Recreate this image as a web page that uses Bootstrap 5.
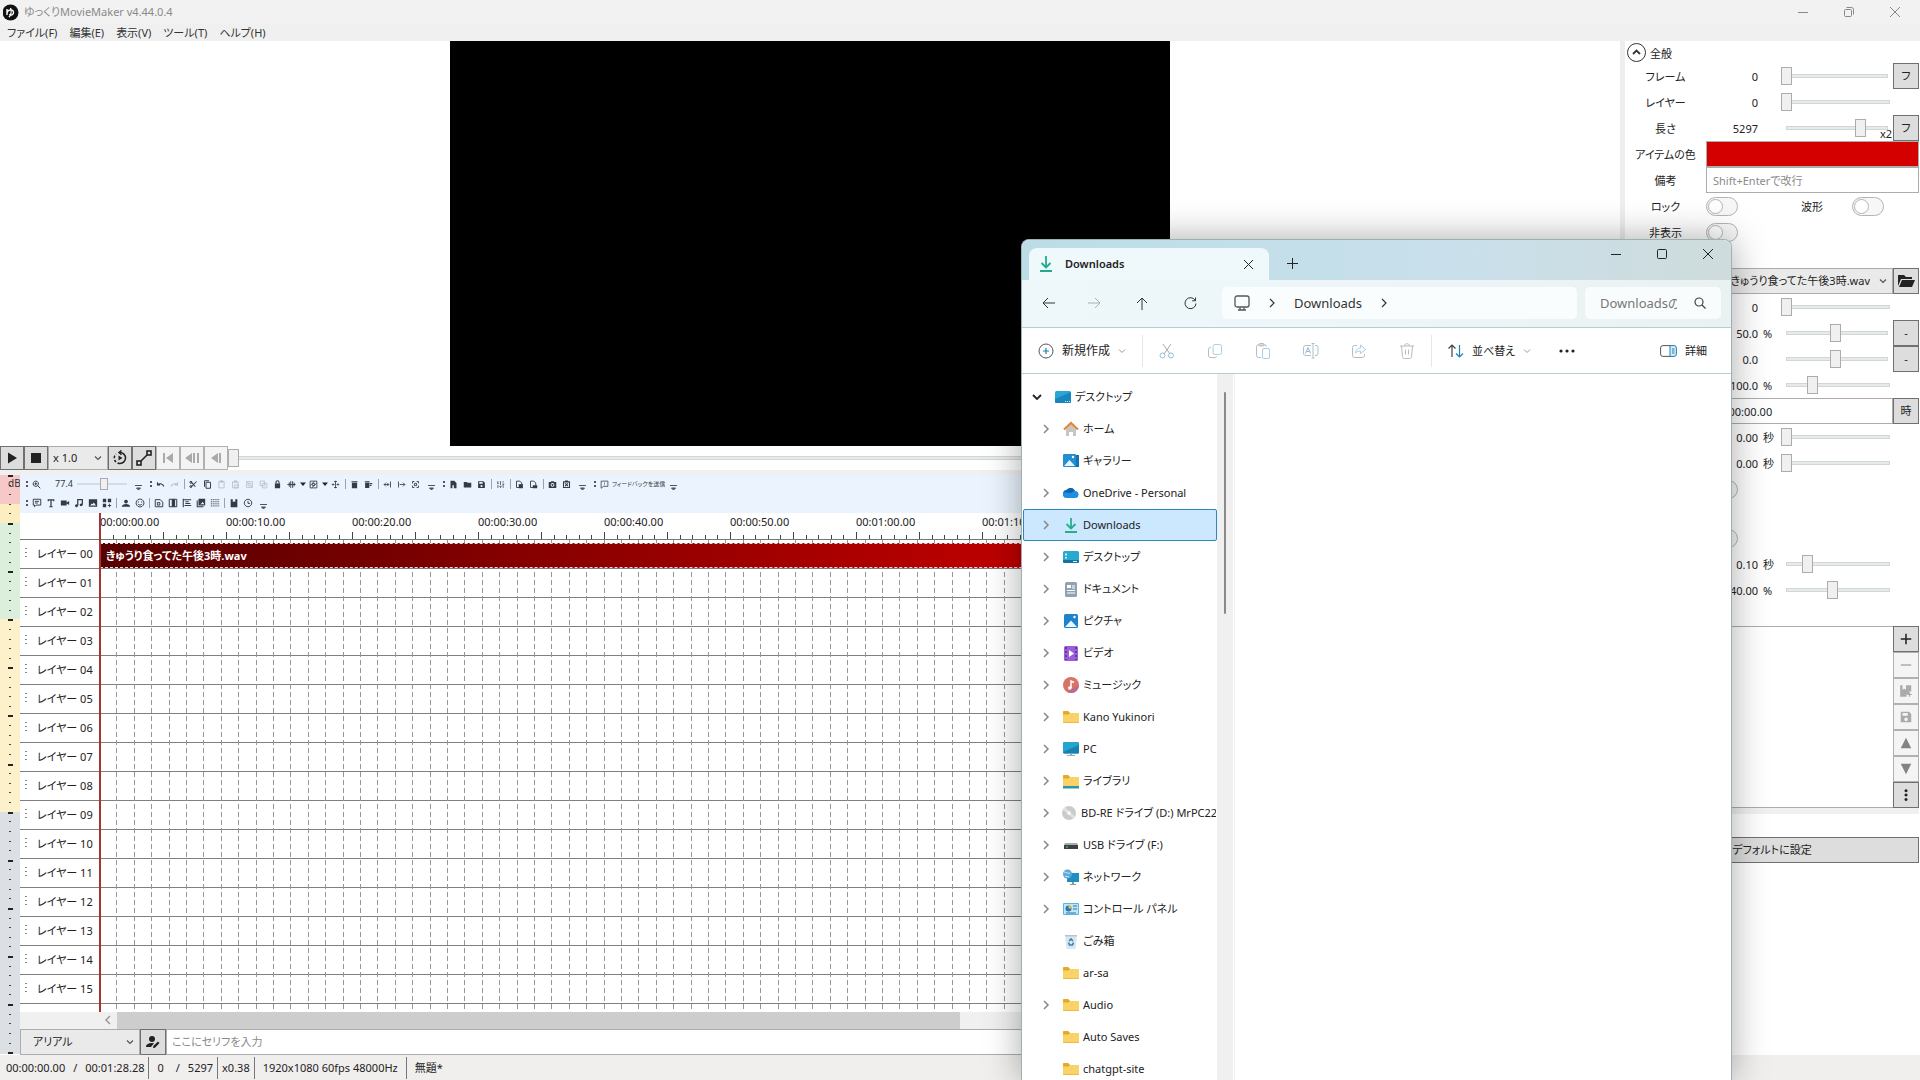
<!DOCTYPE html>
<html lang="ja">
<head>
<meta charset="utf-8">
<meta name="viewport" content="width=device-width, initial-scale=1">
<title>ゆっくりMovieMaker</title>
<link href="https://cdn.jsdelivr.net/npm/bootstrap@5.3.0/dist/css/bootstrap.min.css" rel="stylesheet">
<style>
:root{--line:#acacac;--dark:#707070;--face:#dddddd;--track:#e7eaea}
html,body{height:100%}
body{font-family:"Noto Sans","Noto Sans CJK JP",sans-serif;font-size:11px;line-height:16px;font-feature-settings:"palt";color:#222;background:#fff;overflow:hidden}
svg{display:block;flex:none}
button,input,select{font-feature-settings:"palt";font-family:inherit}
.app{min-height:100vh;height:100vh}
.titlebar{height:24px;background:#f2f2f2;color:#8a8a8a;padding:0 2px 0 3px}
.menubar{height:17px;background:#f0f0f0;gap:12px;padding:0 7px}
.menubar a{color:#333;text-decoration:none;line-height:17px}
.capbtn{width:46px;height:20px;border:0;background:none;padding:0;color:#888;display:flex;align-items:center;justify-content:center}
.stage{background:#fff}
.screen{width:720px;aspect-ratio:16/9;background:#000}
.sq{width:24px;height:24px;padding:0;border:1px solid var(--dark);background:var(--face);color:#222;display:flex;align-items:center;justify-content:center;border-radius:0;flex:none;font-size:11px}
.sq.big{width:26px;height:26px}
.sq:disabled{background:#f4f4f4;border-color:#adb2b5;color:#aaa}
.sq.dim:disabled{color:#838383}
.flatsel{border:1px solid var(--line);border-radius:0;background-color:#eaeaea;height:24px;padding:0 22px 0 12px;font-size:11px;line-height:20px;color:#222;
 --bs-form-select-bg-img:url("data:image/svg+xml,%3csvg xmlns='http://www.w3.org/2000/svg' viewBox='0 0 8 8'%3e%3cpath d='M1 2.5l3 3 3-3' fill='none' stroke='%23555' stroke-width='1.2'/%3e%3c/svg%3e");background-size:8px 8px;background-position:right 5px center}
.rng{appearance:none;-webkit-appearance:none;height:18px;min-width:0;margin:0;background:linear-gradient(#e7eaea,#e7eaea) center/calc(100% - 12px) 2px no-repeat,linear-gradient(#d2d6d6,#d2d6d6) center/calc(100% - 10px) 4px no-repeat}
.rng::-webkit-slider-thumb{-webkit-appearance:none;width:11px;height:18px;background:#f0f0f0;border:1px solid var(--line)}
.rng.tiny{height:12px;width:55px;background:linear-gradient(#d5dce2,#d5dce2) center/calc(100% - 5px) 2px no-repeat}
.rng.tiny::-webkit-slider-thumb{width:8px;height:12px}
.hsplit{height:5px;background:#f0f0f0}
.vsplit{width:5px;background:#eee;flex:none}
.meter{width:20px;flex:none}
.work{min-height:0}
.tools{background:#ebf4fe;height:38px;color:#333b45}
.toolrow{height:19px;padding-left:2px}
.tb{width:14px;height:14px;padding:2px;border:0;background:none;color:inherit;flex:none}
.tb:disabled{color:#b9c0c8}
.tsep{width:1px;height:10px;background:#9aa3ab;margin:0 2px;flex:none}
.grip{width:2px;height:6px;border-top:2px solid #555;border-bottom:2px solid #555;margin:0 2px 0 4px;flex:none}
.zoomval{font-size:9px;margin:0 2px 0 11px}
.feedback{font-size:6px}
.heads{width:80px;flex:none;border-right:1px solid #8a8a8a}
.lane{height:29px;border-bottom:1px solid #808080}
.ruler{height:27px;border-bottom:1px solid #6f7a74}
.cell{width:126px;flex:none;padding-top:1px}
.handle{color:#888;width:13px;padding-left:5px}
.sheet{min-width:0;overflow:hidden}
.overlay{position:absolute;left:0;top:0;width:100%;height:100%;pointer-events:none}
.playhead{position:absolute;left:79px;top:0;bottom:0;width:2px;background:#a8342f}
.clip{position:relative;width:1112px;height:25px;margin-top:3px;background:linear-gradient(90deg,#560000,#d40000);border:1px dashed #f3dcdc;color:#fff;font-weight:700;line-height:23px;padding-left:5px}
.hscroll{height:17px;background:#f0f0f0;padding-left:80px}
.hthumb{width:843px;background:#cdcdcd;height:17px}
.serif-in{border:1px solid var(--line);border-radius:0;height:26px;font-size:11px;padding:0 5px}
.serif-in::placeholder,.note::placeholder{color:#8a8a8a;opacity:1}
.status{height:26px;background:#f1efee;padding:2px 0 0 6px}
.status span.bar{width:1px;height:22px;background:#777}
.props{width:295px;flex:none;padding-right:1px}
.prow{height:26px}
.plabel{width:81px;text-align:center;flex:none;padding-top:2px}
.pval{width:52px;text-align:right;flex:none;padding-top:2px}
.punit{width:23px;padding:2px 0 0 5px;flex:none}
.phead{height:23px}
.swatch{height:26px;padding:0;border:1px solid var(--line);background:#d40000;border-radius:0}
.note{border:1px solid var(--line);border-radius:0;height:26px;font-size:11px;padding:0 6px}
.tog{appearance:none;-webkit-appearance:none;width:32px;height:19px;border:1px solid #b4b4b4;border-radius:10px;background:#f7f7f7;margin:0;padding:1px}
.tog::before{content:"";display:block;width:15px;height:15px;border:1px solid #b4b4b4;border-radius:50%;background:#fff}
.listbox{border:1px solid var(--line);border-right:0}
.x2{position:absolute;right:27px;bottom:-1px}
.explorer{position:absolute;right:188px;top:239px;bottom:0;width:711px;background:#fff;border:1px solid #9fb0b3;border-bottom:0;border-radius:8px 8px 0 0;box-shadow:0 0 36px rgba(0,0,0,.34)}
.tabs{height:40px;background:linear-gradient(90deg,#bcdde6,#c9e0ec 60%,#cfdcdc);border-radius:8px 8px 0 0}
.tab{width:240px;height:32px;margin:8px 0 0 7px;background:#eff8fb;border-radius:8px 8px 0 0;font-weight:600;padding:0 12px 0 10px}
.newtab{margin-top:13px}
.navrow{height:48px;background:linear-gradient(90deg,#eef8fb,#edf5f9 50%,#eaf1f1);border-bottom:1px solid #b4cfcf;padding-right:10px}
.cmdrow{height:47px;border-bottom:1px solid #b9cfcf;padding-top:1px}
.nb{width:48px;height:32px;border:0;background:none;padding:0;color:#333;display:flex;align-items:center;justify-content:center;flex:none}
.nb:disabled{color:#aab}
.addr{height:32px;background:#fafdfe;border-radius:5px;font-size:13px;color:#333}
.find{height:32px;width:136px;background:#f9fcfc;border-radius:5px;padding:0 11px 0 15px}
.find input{border:0;background:none;width:77px;padding:0;font-size:13px;color:#777}
.csep{width:1px;height:32px;background:#e3e9e9;flex:none}
.cmdtxt{border:0;background:none;padding:0;color:#222;display:flex;align-items:center;gap:8px;font-size:12px}
.cmdtxt.snug{font-size:11px}
.side{width:195px;flex:none;padding:7px 0 0 1px}
.node{height:32px;border:1px solid transparent;color:#222;text-decoration:none;padding-left:17px;overflow:hidden;white-space:nowrap;font-size:11px}
.node.root{padding-left:8px}
.node.on{background:#cce8ff;border-color:#2a8ac0;border-radius:2px}
.node .chev{width:12px;margin-right:10px;color:#888}
.node.root .chev{margin-right:11px;color:#222}
.vbar{width:16px;background:#f0f0f0;flex:none;padding:18px 0 0 7px}
.vthumb{width:2px;height:222px;background:#8a8a8a;border-radius:1px}
.files{border-left:1px solid #eee;margin-left:1px}
</style>
<script src="https://cdn.jsdelivr.net/npm/bootstrap@5.3.0/dist/js/bootstrap.bundle.min.js"></script>
</head>
<body>
<div class="app d-flex flex-column position-relative">
  <header>
    <div class="titlebar d-flex align-items-center">
      <svg width="17" height="17" viewBox="0 0 17 17"><circle cx="7.500" cy="8.500" r="8" fill="#111"/><path d="M4 5v6M4 9c1-4 6-4 6.500-1s-3 4-4 2M7.500 4c1.200 3 .5 7-1.500 9" fill="none" stroke="#fff" stroke-width="1.400"/></svg>
      <span class="ms-1">ゆっくりMovieMaker v4.44.0.4</span>
      <div class="ms-auto d-flex">
        <button class="capbtn" aria-label="最小化"><svg width="10" height="10"><path d="M0 5.500h10" stroke="currentColor"/></svg></button>
        <button class="capbtn" aria-label="元に戻す"><svg width="10" height="10" fill="none" stroke="currentColor"><rect x=".5" y="2.500" width="7" height="7" rx="1"/><path d="M2.500.5h5a2 2 0 0 1 2 2v5"/></svg></button>
        <button class="capbtn" aria-label="閉じる"><svg width="10" height="10"><path d="M0 0l10 10M10 0L0 10" stroke="currentColor"/></svg></button>
      </div>
    </div>
    <nav class="menubar d-flex"><a href="#">ファイル(F)</a><a href="#">編集(E)</a><a href="#">表示(V)</a><a href="#">ツール(T)</a><a href="#">ヘルプ(H)</a></nav>
  </header>

  <div class="d-flex flex-grow-1 work">
    <main class="d-flex flex-column flex-grow-1 work sheet">
      <div class="stage d-flex justify-content-center"><div class="screen"></div></div>
      <div class="d-flex align-items-center">
        <button class="sq" aria-label="再生"><svg width="14" height="14" viewBox="0 0 14 14"><path d="M3 1.500v11l9-5.500z" fill="#222"/></svg></button>
        <button class="sq" aria-label="停止"><svg width="10" height="10"><rect width="10" height="10" fill="#222"/></svg></button>
        <select class="form-select flatsel flex-shrink-0 px-1" style="width:60px" aria-label="速度"><option>x 1.0</option></select>
        <button class="sq" aria-label="ループ"><svg width="16" height="16" viewBox="0 0 16 16" fill="none" stroke="#222" stroke-width="1.500"><path d="M8 2.500a5.500 5.500 0 0 1 0 11"/><path d="M8 13.500a5.500 5.500 0 0 1-4-9.500" stroke-dasharray="2.500 1.800"/><path d="M9.500.5L7 2.500l2.500 2.200" /><path d="M6.500 5.500v5l4-2.500z" fill="#222" stroke="none"/></svg></button>
        <button class="sq" aria-label="直線"><svg width="16" height="16" viewBox="0 0 16 16" fill="none" stroke="#222" stroke-width="1.600"><rect x="1" y="11" width="4" height="4"/><rect x="11" y="1" width="4" height="4"/><path d="M5 11l6-6"/></svg></button>
        <button class="sq" disabled aria-label="先頭"><svg width="12" height="12" fill="currentColor"><path d="M1 1h2v10H1zM11 1v10L4 6z"/></svg></button>
        <button class="sq" disabled aria-label="前"><svg width="16" height="12" fill="currentColor"><path d="M8 1v10L1 6zM9 1h2v10H9zM13 1h2v10h-2z"/></svg></button>
        <button class="sq" disabled aria-label="戻る"><svg width="12" height="12" fill="currentColor"><path d="M8 1v10L1 6zM9 1h2v10H9z"/></svg></button>
        <input type="range" class="rng flex-grow-1" min="0" max="100" value="0" aria-label="シーク">
      </div>
      <div class="hsplit"></div>
      <div class="d-flex flex-grow-1 work">
        <svg id="meter" class="meter" height="579"></svg>
        <div class="d-flex flex-column flex-grow-1 sheet">
          <div class="tools">
            <div class="toolrow d-flex align-items-center" id="tools1"></div>
            <div class="toolrow d-flex align-items-center" id="tools2"></div>
          </div>
          <div class="d-flex flex-grow-1 position-relative overflow-hidden work">
            <div class="heads" id="heads"><div class="ruler"></div></div>
            <div class="sheet flex-grow-1">
              <div class="ruler d-flex position-relative overflow-hidden" id="ruler"><svg class="overlay" id="ticks"></svg></div>
              <div class="position-relative" id="lanes"><svg class="overlay" id="beats"></svg></div>
            </div>
            <div class="playhead"></div>
          </div>
          <div class="hscroll d-flex align-items-center"><svg width="17" height="10" fill="none" stroke="#999" stroke-width="1.500"><path d="M10 1L6 5l4 4"/></svg><div class="hthumb"></div></div>
          <div class="d-flex">
            <select class="form-select flatsel flex-shrink-0" style="width:120px;height:26px" aria-label="キャラクター"><option>アリアル</option></select>
            <button class="sq big" aria-label="キャラクター編集"><svg width="14" height="14" viewBox="0 0 14 14" fill="#222"><circle cx="6" cy="4" r="3"/><path d="M0 12c0-3 3-4 6-4l2 .3-3 3.700zM7 13l.3-2L12 6.500l1.500 1.500L9 12.700z"/></svg></button>
            <input class="form-control serif-in" type="text" placeholder="ここにセリフを入力" aria-label="セリフ">
          </div>
        </div>
      </div>
    </main>
    <div class="vsplit"></div>
    <aside class="props" id="props"></aside>
  </div>

  <footer class="status d-flex align-items-center">
    <span>00:00:00.00</span><span class="mx-2">/</span><span>00:01:28.28</span><span class="bar mx-1"></span>
    <span class="ms-1">0</span><span class="mx-2 ps-1">/</span><span>5297</span><span class="bar mx-1"></span><span>x0.38</span><span class="bar mx-1"></span>
    <span class="ms-1">1920x1080 60fps 48000Hz</span><span class="bar mx-2"></span><span>無題*</span>
  </footer>

  <section class="explorer d-flex flex-column" aria-label="Downloads">
    <div class="tabs d-flex align-items-start">
      <div class="tab d-flex align-items-center">
        <svg width="14" height="16" viewBox="0 0 14 16" fill="none" stroke="#22ab8d" stroke-width="1.800"><path d="M7 0v11M2.500 7L7 11.500 11.500 7M1 15h12"/></svg>
        <span class="ms-2 ps-1">Downloads</span>
        <button class="capbtn ms-auto w-auto pe-1 text-dark" aria-label="タブを閉じる"><svg width="9" height="9"><path d="M0 0l9 9M9 0L0 9" stroke="currentColor"/></svg></button>
      </div>
      <button class="capbtn newtab text-dark" aria-label="新しいタブ"><svg width="11" height="11"><path d="M5.500 0v11M0 5.500h11" stroke="currentColor"/></svg></button>
      <div class="d-flex ms-auto mt-1 text-dark">
        <button class="capbtn text-dark" aria-label="最小化"><svg width="10" height="10"><path d="M0 5.500h10" stroke="currentColor"/></svg></button>
        <button class="capbtn text-dark" aria-label="最大化"><svg width="10" height="10"><rect x=".5" y=".5" width="9" height="9" rx="1" fill="none" stroke="currentColor"/></svg></button>
        <button class="capbtn text-dark" aria-label="閉じる"><svg width="10" height="10"><path d="M0 0l10 10M10 0L0 10" stroke="currentColor"/></svg></button>
      </div>
    </div>
    <div class="navrow d-flex align-items-center ps-1">
      <button class="nb" style="width:44px" aria-label="戻る"><svg width="13" height="12" fill="none" stroke="currentColor"><path d="M13 6H1M6 1L1 6l5 5"/></svg></button>
      <button class="nb" disabled aria-label="進む"><svg width="13" height="12" fill="none" stroke="currentColor"><path d="M0 6h12M7 1l5 5-5 5"/></svg></button>
      <button class="nb" aria-label="上へ"><svg width="12" height="13" fill="none" stroke="currentColor"><path d="M6 13V1M1 6l5-5 5 5"/></svg></button>
      <button class="nb" aria-label="更新"><svg width="13" height="13" fill="none" stroke="currentColor"><path d="M11.300 3.500A5.500 5.500 0 1 0 12 6.500M11.500.5v3.300H8.200"/></svg></button>
      <div class="addr d-flex align-items-center flex-grow-1 ms-2 me-2 px-2">
        <svg class="ms-1" width="16" height="16" viewBox="0 0 16 16" fill="none" stroke="#555" stroke-width="1.300"><rect x="1" y="1" width="14" height="11" rx="2"/><path d="M4 15h8M6 12.500V15M10 12.500V15"/></svg>
        <svg class="ms-3 me-3" width="12" height="10" fill="none" stroke="#333" stroke-width="1.200"><path d="M4 1l4 4-4 4"/></svg>
        <span>Downloads</span>
        <svg class="ms-3" width="12" height="10" fill="none" stroke="#333" stroke-width="1.200"><path d="M4 1l4 4-4 4"/></svg>
      </div>
      <label class="find d-flex align-items-center justify-content-between"><input type="text" value="Downloadsの検索" aria-label="検索"><svg class="me-1" width="12" height="12" fill="none" stroke="#444" stroke-width="1.200"><circle cx="5" cy="5" r="4"/><path d="M8 8l3.500 3.500"/></svg></label>
    </div>
    <div class="cmdrow d-flex align-items-center">
      <button class="cmdtxt ms-3"><svg width="16" height="16" viewBox="0 0 16 16" fill="none"><circle cx="8" cy="8" r="7" stroke="#555"/><path d="M8 5v6M5 8h6" stroke="#1d7fb8" stroke-width="1.200"/></svg>新規作成<svg width="8" height="6" fill="none" stroke="#999"><path d="M1 1.500l3 3 3-3"/></svg></button>
      <div class="csep ms-3"></div>
      <button class="nb" disabled aria-label="切り取り"><svg width="16" height="16" fill="none"><path d="M4 1l7 10M12 1L5 11" stroke="#aaa"/><circle cx="3.500" cy="12.500" r="2.500" stroke="#8fc0dc"/><circle cx="12" cy="12.500" r="2.500" stroke="#8fc0dc"/></svg></button>
      <button class="nb" disabled aria-label="コピー"><svg width="16" height="16" fill="none"><rect x="6" y="1.500" width="8.500" height="10" rx="2" stroke="#a8cfe4"/><path d="M4 4.500C2 4.500 1.500 5 1.500 7v5c0 2 .5 2.500 2.500 2.500h3c1.500 0 2.500 0 2.700-1" stroke="#bbb"/></svg></button>
      <button class="nb" disabled aria-label="貼り付け"><svg width="16" height="16" fill="none"><path d="M6 14.500H3.500a2 2 0 0 1-2-2v-9c0-1 .5-1.500 1.500-1.500h7c1 0 1.500.5 1.500 1.500" stroke="#bbb"/><rect x="4" y=".5" width="5" height="2.500" rx="1" stroke="#bbb"/><rect x="7.500" y="5.500" width="7" height="10" rx="1.500" stroke="#a8cfe4"/></svg></button>
      <button class="nb" disabled aria-label="名前の変更"><svg width="18" height="16" fill="none"><path d="M9 2.500H3.500a2 2 0 0 0-2 2v6a2 2 0 0 0 2 2H9M13 2.500h1a2 2 0 0 1 2 2v6a2 2 0 0 1-2 2h-1M9.500.5h3M9.500 15h3M11 .5V15" stroke="#aebfc8"/><path d="M3.500 10.500l2.500-6 2.500 6M4.500 8.500h3" stroke="#8fb8d8"/></svg></button>
      <button class="nb" disabled aria-label="共有"><svg width="16" height="16" fill="none"><path d="M6 2.500H3.500a2 2 0 0 0-2 2v8a2 2 0 0 0 2 2h8a2 2 0 0 0 2-2V11" stroke="#bbb"/><path d="M4.500 10c.5-3.500 2.500-5 5-5V2l5 4.500-5 4V8c-2 0-3.500.5-5 2z" stroke="#a8cfe4"/></svg></button>
      <button class="nb" disabled aria-label="削除"><svg width="14" height="16" fill="none" stroke="#bbb"><path d="M0 3h14M4.500 3c0-3 5-3 5 0M1.500 3l1 10.500c.1 1.500.5 2 2 2h5c1.500 0 1.900-.5 2-2l1-10.500M5.500 6.500v5M8.500 6.500v5"/></svg></button>
      <div class="csep"></div>
      <button class="cmdtxt snug ms-3"><svg width="16" height="14" fill="none" stroke-width="1.200"><path d="M4 13V1M.5 4.500L4 1l3.500 3.500" stroke="#444"/><path d="M11.500 1v12M8 9.500l3.500 3.500L15 9.500" stroke="#1d7fb8"/></svg>並べ替え<svg width="8" height="6" fill="none" stroke="#999"><path d="M1 1.500l3 3 3-3"/></svg></button>
      <button class="nb ms-2 ps-2" aria-label="その他"><svg width="16" height="4"><g fill="#222"><circle cx="2" cy="2" r="1.600"/><circle cx="8" cy="2" r="1.600"/><circle cx="14" cy="2" r="1.600"/></g></svg></button>
      <button class="cmdtxt snug ms-auto me-4"><svg width="17" height="12" fill="none"><path d="M10 .6H3A2.400 2.400 0 0 0 .6 3v6A2.400 2.400 0 0 0 3 11.400h7" stroke="#555"/><path d="M10 .6h4A2.400 2.400 0 0 1 16.400 3v6a2.400 2.400 0 0 1-2.400 2.400h-4zM12 4h2.500M12 6h2.500M12 8h2.500" stroke="#1d7fb8" fill="#d8ecf8"/></svg>詳細</button>
    </div>
    <div class="d-flex flex-grow-1 overflow-hidden">
      <nav class="side" id="tree"></nav>
      <div class="vbar"><div class="vthumb"></div></div>
      <div class="files flex-grow-1"></div>
    </div>
  </section>
</div>

<script>
const $ = id => document.getElementById(id);
const f = d => `<path d="${d}" fill="currentColor"/>`;
const s = (d, w = 2) => `<path d="${d}" fill="none" stroke="currentColor" stroke-width="${w}"/>`;
/* toolbar glyphs, 24 x 24 grid */
const G = {
  zoom: s('M10 3a7 7 0 1 0 .1 0M15 15l7 7M6.500 10h7M10 6.500v7', 2.6),
  undo: s('M4 6v7h7M4 13c5-5 13-4 17 4', 3), redo: s('M20 6v7h-7M20 13c-5-5-13-4-17 4', 3),
  cut: s('M4 3l13 15M4 20L20 4', 2.8) + s('M5 4a2.500 2.500 0 1 0 .1 0M5 15a2.500 2.500 0 1 0 .1 0', 2.5),
  copy: s('M8 6h12v16H8zM4 18V2h12', 2.6), paste: s('M5 4h14v17H5zM9 2h6v4H9z', 2.4),
  paste2: s('M4 5h15v16H4zM9 2h6v4H9zM10 13h9v8h-9z', 2.4),
  group: s('M4 4h16v16H4zM8 8h8v8H8zM4 4l16 16', 2), ungroup: s('M3 3h12v12H3zM9 9h12v12H9z', 2.4),
  lock: f('M5 9h14v13H5z') + s('M8 9V6a4 4 0 0 1 8 0v3', 2.8),
  wave: s('M1 12h22M6 6v12M10 3v18M15 3v18M19 7v10', 2.4),
  box: s('M3 3h18v18H3zM3 15L15 3M7 21L21 8M9 9h6v6H9z', 2.2),
  split: s('M2 12h6M16 12h6M12 2v20M8 4h8M8 20h8M5 9l3 3-3 3M19 9l-3 3 3 3', 2.2),
  trash: f('M5 7h14v15H5zM4 3h16v3H4z'), trash2: f('M3 7h11v14H3zM2 3h13v3H2zM15 8h7v3h-7zM15 13h5v3h-5z'),
  inn: s('M20 4v16M3 12h14M8 7l-5 5 5 5M13 8v8', 2.2), out: s('M4 4v16M7 12h14M16 7l5 5-5 5', 2.2),
  sel: s('M4 4h5M15 4h5M4 20h5M15 20h5M4 4v5M20 4v5M4 15v5M20 15v5M9 9h6v6H9z', 2.4),
  fileadd: f('M4 2h10l6 6v14h-7v-8h-4v8H4z'), folder: f('M2 5h8l2 2h10v13H2z'),
  save: `<path fill-rule="evenodd" fill="currentColor" d="M3 3h14l4 4v14H3zM6 5v5h9V5zM12 13a3 3 0 1 0 .1 0z"/>`,
  mix: s('M5 3v6M5 13v8M12 3v10M12 17v4M19 3v4M19 11v10M3 9h4M9 17h6M17 11h5', 2),
  file1: s('M4 3h9l5 5v12H4z', 2.4) + f('M10 11h11v11H10z'), file2: s('M4 3h9l5 5v12H4z', 2.4) + f('M10 14h12v8H10z'),
  cam: `<path fill-rule="evenodd" fill="currentColor" d="M2 5h5l2-2h6l2 2h5v16H2zM12 8a5 5 0 1 0 .1 0zM12 10.500a2.500 2.500 0 1 1-.1 0z"/>`,
  camx: s('M4 5h16v15H4zM8 9l8 7M16 9l-8 7M8 3h8', 2.8),
  talk: s('M3 3h18v14H10l-4 4v-4H3zM7 8h10M7 12h7', 2.3), text: f('M4 3h16v5h-2.500l-.5-2h-3.500v14H16v2H8v-2h2.500V6H7l-.5 2H4z'),
  video: f('M2 6h14v12H2zM16 11l6-4v10l-6-4z'), music: s('M9 18V4h11v12', 3) + f('M6 15a3.500 3.500 0 1 0 .1 0M17 13a3.500 3.500 0 1 0 .1 0'),
  image: `<path fill-rule="evenodd" fill="currentColor" d="M2 3h20v18H2zM5 18h14l-5-7-3 4-2-2z"/>`,
  shapes: f('M2 2h8v8H2zM14 2h8v8h-8zM2 14h8v8H2zM14 17h8v2h-8zM17 14h2v8h-2z'),
  person: f('M12 4a4.500 4.500 0 1 0 .1 0M2 21c0-9 20-9 20 0z'),
  smile: s('M12 2.500a9.500 9.500 0 1 0 .1 0M7 14c2 4 8 4 10 0M8 8v3M16 8v3', 2.2),
  page: s('M3 4h12l6 6v11H3zM8 11h6v6H8z', 2.3), half: s('M3 3h18v18H3z', 2.4) + f('M9 3h8v18H9z'),
  chart: s('M3 2v20M2 4h20M8 9h8M8 13h12M6 18h16', 2.6),
  photos: s('M3 6v15h15', 2.6) + `<path fill-rule="evenodd" fill="currentColor" d="M6 2h16v16H6zM9 15h11l-4-6-3 4z"/>`,
  dots: s('M2 4h20M2 9h20M2 14h20M2 19h20', 2.4).replace('/>', ' stroke-dasharray="2.500 2"/>'),
  flag: f('M4 3h5v7l3-2 3 2V3h5v19H4z'), clock: s('M12 3a9 9 0 1 0 .1 0M12 7v6h5', 2.2),
  fb: s('M3 3h18v14H9l-6 5zM12 7v3M12 12v2', 2)
};
const draw = (n, px) => `<svg width="${px}" height="${px}" viewBox="0 0 24 24">${G[n]}</svg>`;
const tools = (list, px) => list.split(' ').map(t => {
  if (t === '|') return '<span class="tsep"></span>';
  if (t === ':') return '<span class="grip"></span>';
  if (t === 'v') return '<svg width="16" height="14" style="color:#555"><path d="M5 8.500h7M6.500 11h4l-2 2z" stroke="currentColor" fill="currentColor"/></svg>';
  if (t === '^') return '<svg width="8" height="14"><path d="M1 5.500h6L4 9z" fill="#222"/></svg>';
  if (t === '#') return '<span class="zoomval">77.4</span><input type="range" class="rng tiny" value="53" aria-label="拡大率">';
  if (t === '@') return '<span class="feedback">フィードバックを送信</span>';
  const off = t[0] === '-', n = off ? t.slice(1) : t;
  return `<button class="tb" ${off ? 'disabled' : ''} aria-label="${n}">${draw(n, px)}</button>`;
}).join('');
$('tools1').innerHTML = tools(': zoom # v : undo -redo | cut copy -paste -paste2 -group -ungroup lock wave ^ box ^ split | trash trash2 | inn out sel v : fileadd folder save | mix | file1 file2 | cam camx v : fb @ v', 9);
$('tools2').innerHTML = tools(': talk text video music image shapes | person smile | page half chart photos dots | flag clock v', 10);

/* level meter: zones and 12 x 5 divisions */
const bands = [[0, 29, '#f6c8c8'], [29, 19, '#fdeec0'], [48, 96, '#dbefdc'], [144, 193, '#fdf1cc'], [337, 242, '#dce0e4']];
let m = bands.map(b => `<rect y="${b[0]}" width="20" height="${b[1]}" fill="${b[2]}"/>`).join('');
for (let i = 0; i <= 60; i++) {
  const y = Math.round(i * 9.62);
  m += i % 5 ? `<rect x="9" y="${y}" width="2" height="1" fill="#444"/>` : `<rect x="8" y="${y}" width="5" height="2" fill="#222"/>`;
}
$('meter').innerHTML = m + '<text x="8" y="12" font-size="10" fill="#333">dB</text>';

/* ruler, 12.6 px per second */
const px = 12.6;
let t = '';
for (let i = 0; i < 122; i++) t += `<rect x="${Math.round(i * px)}" y="${i % 5 ? 22 : 19}" width="1" height="${i % 5 ? 4 : 7}" fill="#444"/>`;
$('ticks').innerHTML = t;
for (let i = 0; i < 12; i++) $('ruler').insertAdjacentHTML('beforeend', `<div class="cell">00:0${Math.floor(i / 6)}:${i % 6}0.00</div>`);

for (let i = 0; i < 16; i++) {
  const n = String(i).padStart(2, '0');
  $('heads').insertAdjacentHTML('beforeend', `<div class="lane d-flex align-items-center"><span class="handle"><svg width="2" height="12" fill="currentColor"><path d="M0 0h2v1H0zM0 4h2v1H0zM0 8h2v1H0z"/></svg></span><span class="ps-1">レイヤー ${n}</span></div>`);
  $('lanes').insertAdjacentHTML('beforeend', `<div class="lane overflow-hidden">${i ? '' : '<div class="clip">きゅうり食ってた午後3時.wav</div>'}</div>`);
}
$('lanes').insertAdjacentHTML('beforeend', '<div style="height:29px"></div>');
let b = '';
for (let i = 1; i < 88; i++) { const x = Math.round(i * 17.4) - .5; b += `M${x} 0V493`; }
$('beats').innerHTML = `<path d="${b}" stroke="#959595" stroke-dasharray="5 3" fill="none"/>`;

/* property rows */
const row = (label, val, unit, pos, btn, extra = '') => `<div class="prow d-flex align-items-center position-relative"><span class="plabel">${label}</span><span class="pval">${val}</span><span class="punit">${unit}</span><input type="range" class="rng flex-grow-1" value="${pos}" aria-label="${label || val}"${btn ? '' : ' style="margin-right:24px"'}>${btn ? `<button class="sq big">${btn}</button>` : ''}${extra}</div>`;
const tog = (l) => `<input type="checkbox" class="tog" aria-label="${l}">`;
const mini = (inner, dis, lab) => `<button class="sq big ${dis === 2 ? 'dim' : ''}" ${dis ? 'disabled' : ''} aria-label="${lab}"><svg width="14" height="14" viewBox="0 0 24 24">${inner}</svg></button>`;
$('props').innerHTML = `
<div class="d-flex align-items-center gap-1" style="height:22px;padding-left:2px"><svg width="19" height="19" fill="none" stroke="#333"><circle cx="9.500" cy="9.500" r="9"/><path d="M6 11l3.500-3.500L13 11" stroke-width="1.800"/></svg><span class="pt-1">全般</span></div>`
+ row('フレーム', '0', '', 0, 'フ') + row('レイヤー', '0', '', 0, '') + row('長さ', '5297', '', 73, 'フ', '<span class="x2">x2</span>')
+ `<div class="prow d-flex align-items-center"><span class="plabel">アイテムの色</span><button class="swatch flex-grow-1" aria-label="アイテムの色"></button></div>
<div class="prow d-flex align-items-center"><label class="plabel" for="note">備考</label><input id="note" class="form-control note" placeholder="Shift+Enterで改行"></div>
<div class="prow d-flex align-items-center"><span class="plabel">ロック</span>${tog('ロック')}<span class="plabel" style="width:114px;padding-left:34px">波形</span>${tog('波形')}</div>
<div class="prow d-flex align-items-center"><span class="plabel">非表示</span>${tog('非表示')}</div>
<div class="phead"></div>
<div class="prow d-flex"><span class="plabel"></span><select class="form-select flatsel text-end" style="height:26px" aria-label="ファイル"><option>きゅうり食ってた午後3時.wav</option></select><button class="sq big" aria-label="開く"><svg width="18" height="14" viewBox="0 0 18 14"><path d="M1 12V1h6l2 2h6v2H4zM2 13L5 6h13l-3 7z" fill="#222"/></svg></button></div>`
+ row('', '0', '', 0, '') + row('', '50.0', '%', 49, '-') + row('', '0.0', '', 49, '-') + row('', '100.0', '%', 25, '')
+ `<div class="prow d-flex"><span class="plabel"></span><input class="form-control note" value="00:00:00.00" aria-label="再生開始位置"><button class="sq big">時</button></div>`
+ row('', '0.00', '秒', 0, '') + row('', '0.00', '秒', 0, '')
+ `<div class="prow d-flex align-items-center"><span class="plabel"></span>${tog('ループ')}</div><div class="phead"></div>
<div class="prow d-flex align-items-center"><span class="plabel"></span>${tog('エコー')}</div>`
+ row('', '0.10', '秒', 20, '') + row('', '40.00', '%', 45, '')
+ `<div class="phead"></div>
<div class="d-flex"><div class="listbox flex-grow-1"></div><div>`
+ mini(s('M12 3v18M3 12h18', 2.6), 0, '追加') + mini(s('M3 12h18', 2.5), 1, '削除')
+ mini(f('M2 2h4v8l3-2 3 2V2h9v11h-4v4h-4v5H2zM17 14h2v3h3v2h-3v3h-2v-3h-3v-2h3z'), 1, 'テンプレート') + mini(G.save, 1, '保存')
+ mini(f('M12 3l9 18H3z'), 2, '上へ') + mini(f('M12 21L3 3h18z'), 2, '下へ')
+ mini(f('M12 2a2.600 2.600 0 1 0 .1 0M12 9.500a2.600 2.600 0 1 0 .1 0M12 17a2.600 2.600 0 1 0 .1 0'), 0, 'メニュー')
+ `</div></div><div class="hsplit" style="height:6px"></div><div class="phead"></div>
<button class="sq w-100" style="height:26px">デフォルトに設定</button>`;

/* explorer tree */
const folder = '<path d="M0 3a1 1 0 0 1 1-1h4l2 2h8a1 1 0 0 1 1 1v8a1 1 0 0 1-1 1H1a1 1 0 0 1-1-1z" fill="#f9d368"/><path d="M0 3a1 1 0 0 1 1-1h4l2 2-1.500 1.500H0z" fill="#e3a92b"/><path d="M0 13h16a1 1 0 0 1-1 1H1a1 1 0 0 1-1-1z" fill="#eeb93d"/>';
const I = {
  desk: '<rect y="2" width="16" height="12" rx="1.500" fill="#2aa5d6"/><path d="M0 10L16 3v9.500a1.500 1.500 0 0 1-1.500 1.500h-13A1.500 1.500 0 0 1 0 12.500z" fill="#1786bd"/><path d="M10 12.500h5" stroke="#bfe9f7" stroke-dasharray="1 1"/>',
  desk2: '<rect y="2" width="16" height="12" rx="1.500" fill="#2aa9cf"/><path d="M0 11h16v1.500a1.500 1.500 0 0 1-1.500 1.500h-13A1.500 1.500 0 0 1 0 12.500z" fill="#14739c"/><path d="M2 4.500h2v2H2zM2 8h2v1.500H2zM10 12h4v1h-4z" fill="#d8f4fb"/>',
  home: '<path d="M3 8l5-5 5 5v7H10v-4H6v4H3z" fill="#c9c5c3"/><path d="M1 8.500L8 2l7 6.500" fill="none" stroke="#e0863a" stroke-width="2.200"/>',
  gal: '<path d="M4 2h12v12H4z" fill="#1573b5"/><rect x="0" y="1" width="13" height="13" rx="1" fill="#238fd2"/><path d="M1 13l5.500-6L12 13z" fill="#e6f6ff"/><circle cx="10" cy="4" r="1.200" fill="#fff"/>',
  cloud: '<path d="M4 13a4 4 0 0 1-.5-8A5 5 0 0 1 12 6a3.500 3.500 0 0 1 0 7z" fill="#1c8fe0"/><path d="M3.500 5A5 5 0 0 1 12 6c-2 0-3 2-5 2S4 7 .5 8a4 4 0 0 1 3-3z" fill="#1263ae"/>',
  down: '<path d="M8 1v10M3.500 7L8 11.500 12.500 7M2 15h12" fill="none" stroke="#27ae8f" stroke-width="1.800"/>',
  doc: '<rect x="2" y="1" width="12" height="15" rx="1.500" fill="#8fa3b5"/><path d="M4 4h4v3H4zM9 4.500h3v1H9zM9 6.500h3v1H9zM4 9h8v1H4zM4 11.500h8v1H4z" fill="#fff"/>',
  pic: '<rect x="1" y="1" width="14" height="14" rx="1.500" fill="#1c83cc"/><path d="M2 14l6-6.500L14 14z" fill="#eaf8ff"/><circle cx="11.500" cy="4" r="1.200" fill="#fff"/>',
  vid: '<rect x="1" y="1" width="14" height="15" rx="1.500" fill="#9a5fd6"/><path d="M3 2v13M13 2v13" stroke="#5c2f9c" stroke-width="1.600" stroke-dasharray="2 2"/><path d="M6 5v7l5-3.500z" fill="#fff"/>',
  mus: '<circle cx="8" cy="8" r="8" fill="#d77466"/><path d="M8 16A8 8 0 0 0 16 8L4 15z" fill="#b96a94"/><path d="M8 11V4l3 1.500" fill="none" stroke="#fff" stroke-width="1.500"/><circle cx="6.800" cy="11" r="1.800" fill="#fff"/>',
  folder, lib: folder + '<path d="M0 13h16v2.500H0z" fill="#2c97a8"/>',
  pc: '<rect y="1" width="16" height="11.500" rx="1" fill="#27a3cf"/><path d="M0 11L16 4v7.500a1 1 0 0 1-1 1H1z" fill="#1583ad"/><path d="M7 12.500h2V14h3v1H4v-1h3z" fill="#9ab"/>',
  disc: '<circle cx="8" cy="8" r="7" fill="#cbcbcb"/><path d="M8 8L3 3.500M8 8l5 4.500" stroke="#e2e2e2" stroke-width="3"/><circle cx="8" cy="8" r="2" fill="#f6f6f6"/>',
  usb: '<path d="M2 6h12l1 2H1z" fill="#aaa"/><rect x="1" y="8" width="14" height="4" fill="#3a4046"/><path d="M3 9.500h2v1H3z" fill="#5fd08a"/>',
  net: '<rect x="4" y="4" width="12" height="9" fill="#1f8fc2"/><path d="M9 13h2v2h-2zM7 15h6v1H7z" fill="#89a"/><circle cx="4.500" cy="5" r="4.500" fill="#5aa9d8"/><path d="M1 3c3 0 3 2 6 1M2 7l4 1" stroke="#cfeaf8" fill="none"/>',
  ctl: '<rect y="2" width="16" height="12" rx="1" fill="#58b5dd"/><rect x="1" y="3" width="14" height="10" fill="#bfe6f5"/><circle cx="5.500" cy="7.500" r="3" fill="#2876b0"/><path d="M5.500 7.500V4.500a3 3 0 0 1 3 3z" fill="#f4b63c"/><path d="M10 5h4M10 8h4M3 12h10" stroke="#2876b0" stroke-width="1.200"/>',
  bin: '<path d="M2 2h12l-1.500 14h-9z" fill="#dfe6ea"/><path d="M2 2h12v1.500H2z" fill="#b9c4ca"/><path d="M6 8l2-2 2 2M5.500 9.500L6.500 12h3l1-2.500" fill="none" stroke="#2a86cf" stroke-width="1.600"/>'
};
const nodes = [['desk', 'デスクトップ', 'r'], ['home', 'ホーム', 1], ['gal', 'ギャラリー', 0], ['cloud', 'OneDrive - Personal', 1], ['down', 'Downloads', 1, 1], ['desk2', 'デスクトップ', 1], ['doc', 'ドキュメント', 1], ['pic', 'ピクチャ', 1], ['vid', 'ビデオ', 1], ['mus', 'ミュージック', 1], ['folder', 'Kano Yukinori', 1], ['pc', 'PC', 1], ['lib', 'ライブラリ', 1], ['disc', 'BD-RE ドライブ (D:) MrPC22', 1], ['usb', 'USB ドライブ (F:)', 1], ['net', 'ネットワーク', 1], ['ctl', 'コントロール パネル', 1], ['bin', 'ごみ箱', 0], ['folder', 'ar-sa', 0], ['folder', 'Audio', 1], ['folder', 'Auto Saves', 0], ['folder', 'chatgpt-site', 0]];
$('tree').innerHTML = nodes.map(([ic, name, c, on]) => `<a href="#" class="node d-flex align-items-center ${c === 'r' ? 'root' : ''} ${on ? 'on' : ''}"><span class="chev">${c === 'r' ? '<svg width="10" height="10" fill="none" stroke="currentColor" stroke-width="1.800"><path d="M1 3l4 4 4-4"/></svg>' : c ? '<svg width="10" height="10" fill="none" stroke="currentColor" stroke-width="1.500"><path d="M3 1l4 4-4 4"/></svg>' : ''}</span><svg width="16" height="16" viewBox="0 0 16 16">${I[ic]}</svg><span class="ps-1">${name}</span></a>`).join('');
</script>
</body>
</html>
